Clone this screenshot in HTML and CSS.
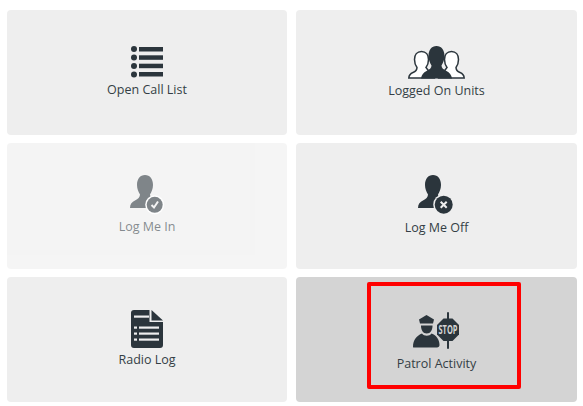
FILE: index.html
```html
<!DOCTYPE html>
<html lang="en">
<head>
    <meta charset="UTF-8">
    <title>Unit Menu</title>
    <link rel="stylesheet" href="styles.css">
</head>
<body>
    <div class="menu-grid">
        <a class="menu-tile tile-list">
            <svg class="tile-icon" width="32" height="32" viewBox="0 0 32 32">
                <circle cx="3" cy="3" r="3"/><rect x="8" y="1" width="24" height="4.5"/>
                <circle cx="3" cy="11.500" r="3"/><rect x="8" y="9.300" width="24" height="4.500"/>
                <circle cx="3" cy="20" r="3"/><rect x="8" y="17.700" width="24" height="4.500"/>
                <circle cx="3" cy="28.500" r="3"/><rect x="8" y="26" width="24" height="4.500"/>
            </svg>
            <span class="tile-label">Open Call List</span>
        </a>
        <a class="menu-tile tile-units">
            <svg class="tile-icon" width="57" height="34" viewBox="0 0 57 34">
                <path class="outline" d="M13.500 6.500C18 6.500 20.500 10 20.500 14.500C20.500 18 19.500 20.500 18 22.500L26 33H.8C1 30 2.500 28.500 5 27.500C7.500 26.500 9 25 9 22.500C7.500 20.500 6.500 18 6.500 14.500C6.500 10 9 6.500 13.500 6.500Z"/>
                <path class="outline" d="M43.500 6.500C48 6.500 50.500 10 50.500 14.500C50.500 18 49.500 20.500 48 22.500C48 25 49.500 26.500 52 27.500C54.500 28.500 56 30 56.200 33H31L39 22.500C37.500 20.500 36.500 18 36.500 14.500C36.500 10 39 6.500 43.500 6.500Z"/>
                <path d="M28.500 1C23.500 1 20.500 5 20.500 11C20.500 15 22 18 23.500 20.500C23.500 23 21.500 24.500 18.500 26C15.500 27.500 13.500 30 13 33.500H44C43.500 30 41.500 27.500 38.500 26C35.500 24.500 33.500 23 33.500 20.500C35 18 36.500 15 36.500 11C36.500 5 33.500 1 28.500 1Z"/>
            </svg>
            <span class="tile-label">Logged On Units</span>
        </a>
        <a class="menu-tile tile-login is-disabled">
            <svg class="tile-icon" width="36" height="40" viewBox="0 0 36 40">
                <path d="M16 0C11 0 8 4 8 10C8 14 9.500 17 11 19.500C11 22 9 24 6 25.500C3 27 1 29 1 33H31C31 29 29 27 26 25.500C23 24 21 22 21 19.500C22.500 17 24 14 24 10C24 4 21 0 16 0Z"/>
                <circle class="badge-ring" cx="25.700" cy="29.800" r="9.500"/>
                <circle cx="25.700" cy="29.800" r="8"/>
                <path class="badge-mark" d="M22.500 30L25 32.500L29 26.500"/>
            </svg>
            <span class="tile-label">Log Me In</span>
        </a>
        <a class="menu-tile tile-logoff">
            <svg class="tile-icon" width="39" height="41" viewBox="0 0 39 41">
                <path d="M16 0C11 0 8 4 8 10C8 14 9.500 17 11 19.500C11 22 9 24 6 25.500C3 27 1 29 1 33H31C31 29 29 27 26 25.500C23 24 21 22 21 19.500C22.500 17 24 14 24 10C24 4 21 0 16 0Z"/>
                <circle class="badge-ring" cx="26.700" cy="29.700" r="10.500"/>
                <circle cx="26.700" cy="29.700" r="9"/>
                <path class="badge-mark" d="M23.700 26.700L29.700 32.700M29.700 26.700L23.700 32.700"/>
            </svg>
            <span class="tile-label">Log Me Off</span>
        </a>
        <a class="menu-tile tile-radio">
            <svg class="tile-icon" width="32" height="38" viewBox="0 0 32 38">
                <path d="M3 0H18.500V12H32V35A3 3 0 0 1 29 38H3A3 3 0 0 1 0 35V3A3 3 0 0 1 3 0Z"/>
                <path d="M20.500 0L32 10.500H20.500Z"/>
                <g class="doc-lines">
                    <rect x="3" y="5.500" width="15" height="2.200"/>
                    <rect x="3" y="16.500" width="3" height="2.200"/><rect x="8" y="16.500" width="20" height="2.200"/>
                    <rect x="3" y="22.500" width="3" height="2.200"/><rect x="8" y="22.500" width="20" height="2.200"/>
                    <rect x="3" y="28.500" width="3" height="2.200"/><rect x="8" y="28.500" width="20" height="2.200"/>
                </g>
            </svg>
            <span class="tile-label">Radio Log</span>
        </a>
        <a class="menu-tile tile-patrol is-active">
            <svg class="tile-icon" width="47" height="40" viewBox="0 0 47 40">
                <path d="M6 7.500L13.500 3L21 7.500L20 11.500H7Z"/>
                <path d="M8 13.500H19.500C19.500 18 17.500 21.500 13.700 21.500C10 21.500 8 18 8 13.500Z"/>
                <path d="M0 35C0 27.500 4 23.500 9 21.500C11 24.500 16.500 24.500 18.500 21.500C23.500 23.500 26.500 27.500 26.500 33C26.500 34.500 25.500 35.500 24 35.500H1.500C.5 35.500 0 35.500 0 35Z"/>
                <rect x="34" y="0" width="2" height="37" rx="1"/>
                <path d="M30.500 6.500H39.500L46 13V22.500L39.500 29H30.500L24 22.500V13Z"/>
                <text class="stop-text" x="35" y="22" textLength="19" lengthAdjust="spacingAndGlyphs">STOP</text>
            </svg>
            <span class="tile-label">Patrol Activity</span>
            <div class="highlight-box"></div>
        </a>
    </div>
</body>
</html>
```

FILE: styles.css
```css
body {
    margin: 0;
    background: #fff;
    font-family: "Open Sans", "Liberation Sans", sans-serif;
}

.menu-grid {
    display: grid;
    grid-template-columns: 280px 281px;
    grid-template-rows: repeat(3, 1fr);
    column-gap: 9px;
    row-gap: 8px;
    height: 392px;
    padding: 10px 6px 4px 7px;
}

.menu-tile {
    position: relative;
    display: flex;
    flex-direction: column;
    align-items: center;
    gap: 3px;
    background-color: #eee;
    border-radius: 4px;
    color: #343e45;
    font-size: 12.5px;
    line-height: 18px;
}

.tile-icon {
    display: block;
    fill: #2b353c;
    overflow: visible;
}

.tile-list { padding-top: 36px; }
.tile-units { padding-top: 35px; }
.tile-login { padding-top: 32px; }
.tile-logoff { padding-top: 32px; }
.tile-radio { padding-top: 33px; }
.tile-patrol { padding-top: 35px; }

.is-disabled {
    opacity: 0.6;
}

.is-active {
    background-color: #d4d4d4;
}

.outline {
    fill: #fff;
    stroke: #2b353c;
    stroke-width: 1.5;
}

.badge-ring {
    fill: #eee;
}

.is-disabled .badge-ring {
    fill: #fff;
}

.badge-mark {
    fill: none;
    stroke: #eee;
    stroke-width: 2;
}

.doc-lines {
    fill: #eee;
}

.stop-text {
    fill: #d4d4d4;
    font-family: "Open Sans", sans-serif;
    font-size: 12px;
    font-weight: 700;
    text-anchor: middle;
}

/* red marker drawn on top of the screenshot */
.highlight-box {
    position: absolute;
    left: 71px;
    top: 5px;
    width: 146px;
    height: 99px;
    border: 4px solid #f00;
    border-radius: 2px;
}
```
